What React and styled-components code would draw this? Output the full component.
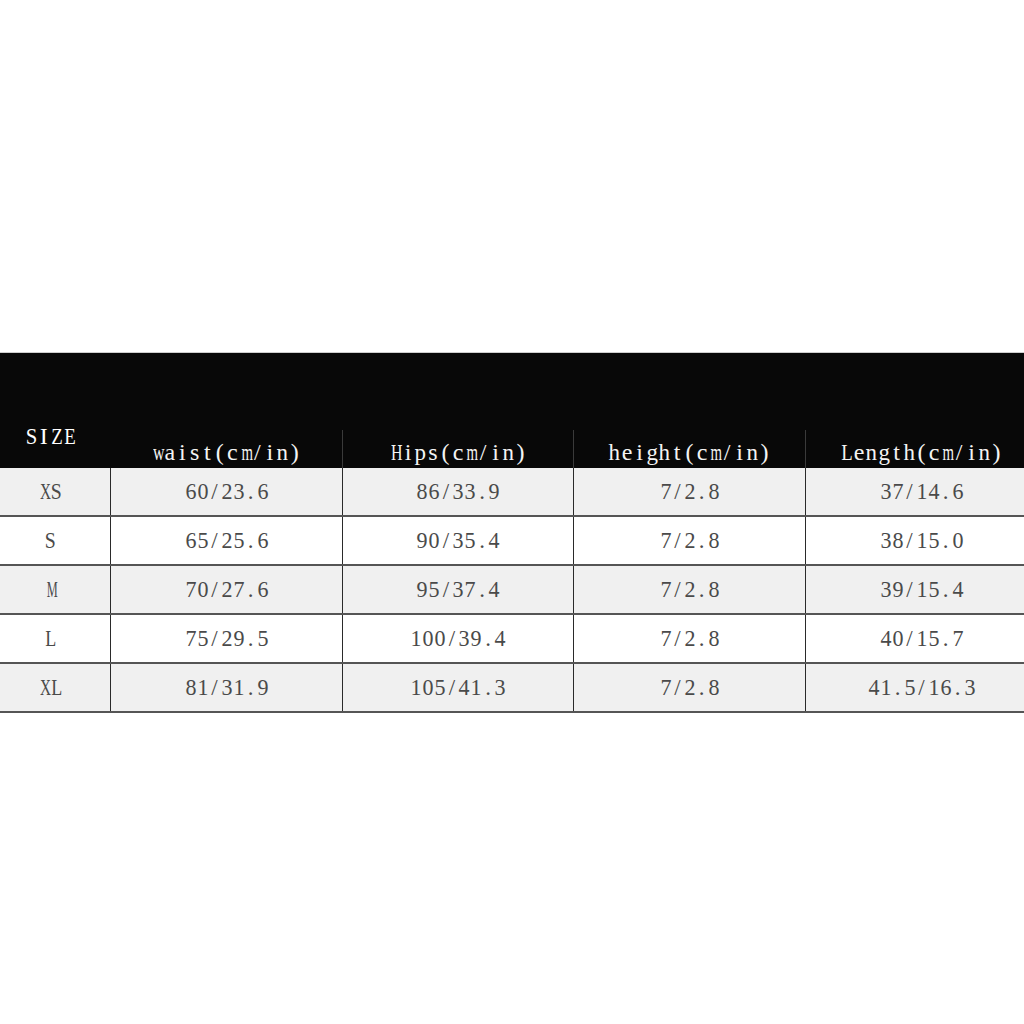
import React from "react";
import styled, { createGlobalStyle } from "styled-components";

const GlobalStyle = createGlobalStyle`
  html, body {
    margin: 0;
    padding: 0;
    background: #ffffff;
  }
  body {
    width: 1024px;
    height: 1024px;
    overflow: hidden;
  }
`;

const COLS = "110px 232px 231px 232px 232px";

const Page = styled.div`
  width: 1024px;
  height: 1024px;
  overflow: hidden;
  padding-top: 352px;
  box-sizing: border-box;
  font-family: "Liberation Serif", "Noto Sans CJK SC", serif;
`;

const Table = styled.div`
  width: 1037px;
  border-top: 1px solid #cfcfcf;
`;

const HeadRow = styled.div`
  display: grid;
  grid-template-columns: ${COLS};
  height: 115px;
  background: #080808;
`;

const SizeHead = styled.div`
  color: #ffffff;
  padding: 71px 10px 0 0;
  display: flex;
  justify-content: center;
  align-items: flex-start;
`;

const HeadCell = styled.div`
  align-self: end;
  height: 38px;
  border-left: ${(p) => (p.$first ? "none" : "1.5px solid #3a3a3a")};
  color: #f4f4f4;
  display: flex;
  align-items: center;
  justify-content: center;
  padding-top: 5px;
  box-sizing: border-box;
`;

const Row = styled.div`
  display: grid;
  grid-template-columns: ${COLS};
  height: 49px;
  background: ${(p) => (p.$shade ? "#f0f0f0" : "#ffffff")};
  border-bottom: 2px solid #555555;
  box-sizing: border-box;
`;

const Cell = styled.div`
  display: flex;
  align-items: center;
  justify-content: center;
  color: #4a4a4a;
  padding-right: ${(p) => (p.$first ? "10px" : "0")};
  border-left: ${(p) => (p.$first ? "none" : "1.5px solid #2a2a2a")};
`;

// half-width cells, like a CJK system font renders latin text
const Line = styled.span`
  display: inline-flex;
  font-size: ${(p) => p.$size}px;
  line-height: 1;
`;

const Glyph = styled.span`
  display: inline-block;
  width: ${(p) => p.$w}px;
  text-align: center;
  transform: scaleX(${(p) => p.$sx});
`;

// advance widths of Liberation Serif, in em
const ADV = {
  ".": 0.25, "/": 0.278, "(": 0.333, ")": 0.333,
  a: 0.444, c: 0.444, e: 0.444, g: 0.5, h: 0.5, i: 0.278, m: 0.778,
  n: 0.5, p: 0.5, s: 0.389, t: 0.278, w: 0.722,
  H: 0.722, L: 0.611, S: 0.556, I: 0.333, Z: 0.611, E: 0.611, X: 0.722, M: 0.889,
};

const Mono = ({ text, w, size }) => (
  <Line $size={size}>
    {text.split("").map((c, i) => {
      const adv = (ADV[c] ?? 0.5) * size;
      const sx = Math.min(1, (w - 1) / adv);
      return (
        <Glyph key={i} $w={w} $sx={sx.toFixed(3)}>
          {c}
        </Glyph>
      );
    })}
  </Line>
);

const headers = ["waist(cm/in)", "Hips(cm/in)", "height(cm/in)", "Length(cm/in)"];

const rows = [
  ["XS", "60/23.6", "86/33.9", "7/2.8", "37/14.6"],
  ["S", "65/25.6", "90/35.4", "7/2.8", "38/15.0"],
  ["M", "70/27.6", "95/37.4", "7/2.8", "39/15.4"],
  ["L", "75/29.5", "100/39.4", "7/2.8", "40/15.7"],
  ["XL", "81/31.9", "105/41.3", "7/2.8", "41.5/16.3"],
];

export default function App() {
  return (
    <>
      <GlobalStyle />
      <Page>
        <Table>
          <HeadRow>
            <SizeHead>
              <Mono text="SIZE" w={12.5} size={24} />
            </SizeHead>
            {headers.map((h, i) => (
              <HeadCell key={h} $first={i === 0}>
                <Mono text={h} w={12.5} size={24} />
              </HeadCell>
            ))}
          </HeadRow>
          {rows.map((r, i) => (
            <Row key={r[0]} $shade={i % 2 === 0}>
              {r.map((v, j) => (
                <Cell key={j} $first={j === 0}>
                  <Mono text={v} w={12} size={23} />
                </Cell>
              ))}
            </Row>
          ))}
        </Table>
      </Page>
    </>
  );
}
